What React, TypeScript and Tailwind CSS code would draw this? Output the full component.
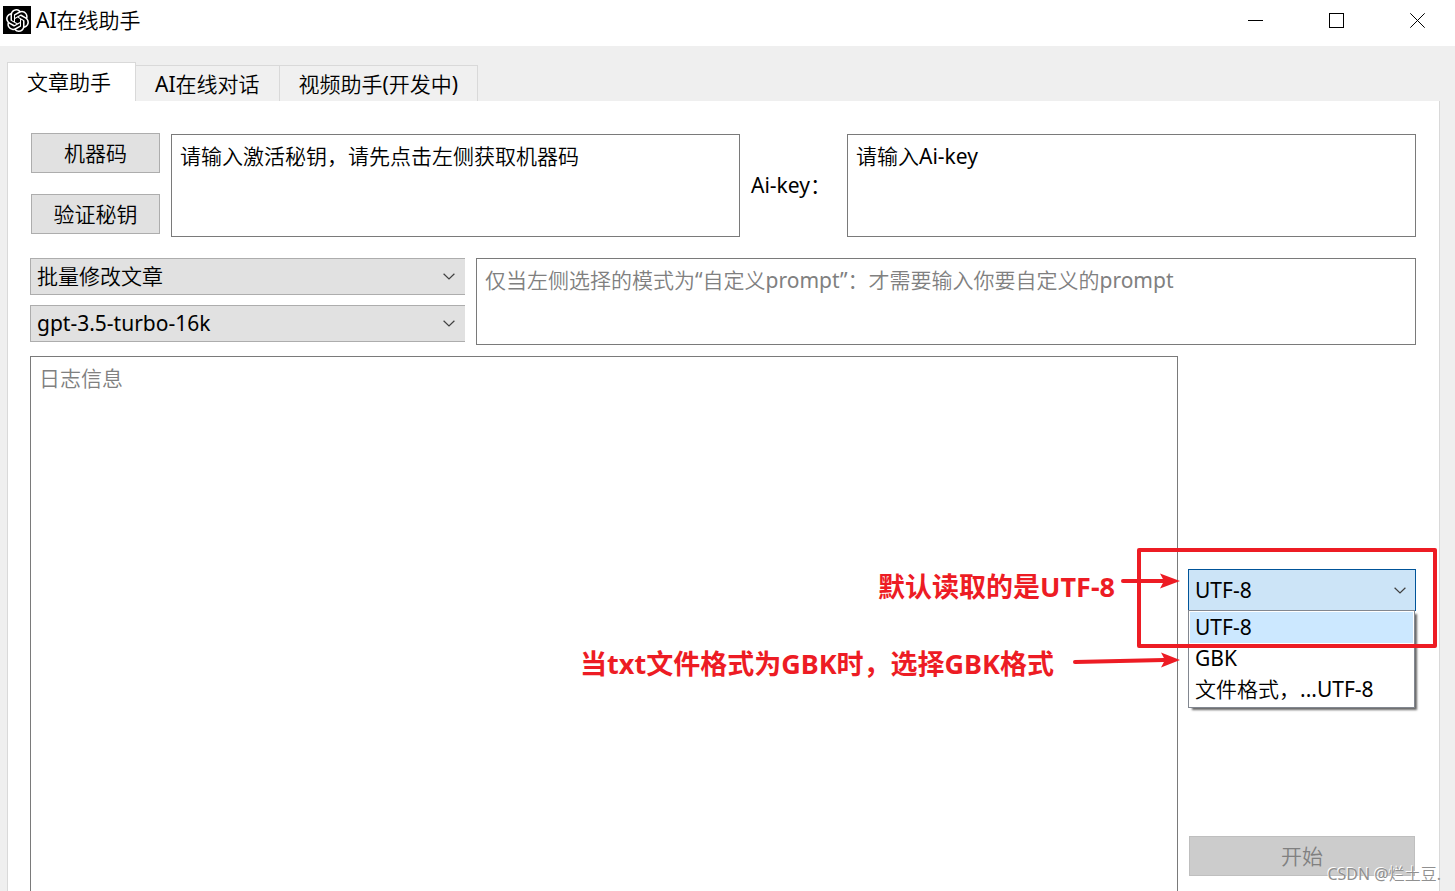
import { useState } from "react";
import type { ReactNode } from "react";
import { SiOpenai } from "react-icons/si";

const tabs = ["文章助手", "AI在线对话", "视频助手(开发中)"];
const encodings = ["UTF-8", "GBK", "文件格式，...UTF-8"];

function Chevron() {
  return (
    <svg
      className="pointer-events-none absolute right-[10px] h-[7px] w-[12px]"
      viewBox="0 0 12 7"
      fill="none"
      stroke="#404040"
      strokeWidth="1.2"
      aria-hidden="true"
    >
      <path d="M0.6 0.8 6 6 11.4 0.8" />
    </svg>
  );
}

function WindowButton({ label, children }: { label: string; children: ReactNode }) {
  return (
    <button type="button" aria-label={label}>
      <svg className="size-[15px]" viewBox="0 0 15 15" fill="none" stroke="#000">
        {children}
      </svg>
    </button>
  );
}

function TitleBar() {
  return (
    <header className="flex h-[46px] items-start justify-between bg-white pr-[30px] pl-[3px]">
      <div className="flex h-10 items-center gap-[5px]">
        <span className="flex size-7 items-center justify-center bg-black text-white">
          <SiOpenai className="size-[23px]" />
        </span>
        <h1>AI在线助手</h1>
      </div>
      <div className="flex h-10 items-center gap-[66px]">
        <WindowButton label="最小化">
          <path d="M0 7.5H15" />
        </WindowButton>
        <WindowButton label="最大化">
          <rect x="0.5" y="0.5" width="14" height="14" />
        </WindowButton>
        <WindowButton label="关闭">
          <path d="M0.3 0.3 14.7 14.7M14.7 0.3 0.3 14.7" />
        </WindowButton>
      </div>
    </header>
  );
}

function ModeSelect({ label, options }: { label: string; options: string[] }) {
  return (
    <div className="relative flex items-center">
      <select
        aria-label={label}
        className="h-[37px] w-full appearance-none border border-r-0 border-[#adadad] bg-[#e1e1e1] pb-[2px] pl-[6px] outline-none"
      >
        {options.map((option) => (
          <option key={option}>{option}</option>
        ))}
      </select>
      <Chevron />
    </div>
  );
}

const noteText =
  "absolute z-20 font-['Noto_Sans','Noto_Sans_CJK_SC',sans-serif] text-[27px] leading-9 font-bold whitespace-nowrap text-[#ed1c24]";

function EncodingNotes() {
  return (
    <>
      <div className="pointer-events-none absolute -top-[21px] -left-[51px] z-20 h-[100px] w-[300px] rounded-xs border-4 border-[#ed1c24]" />
      <p className={`${noteText} top-0 right-[301px]`}>默认读取的是UTF-8</p>
      <p className={`${noteText} top-[77px] right-[362px]`}>当txt文件格式为GBK时，选择GBK格式</p>
      <svg
        className="pointer-events-none absolute top-0 right-[236px] z-20 h-[110px] w-[112px]"
        viewBox="0 0 112 110"
        fill="#ed1c24"
        stroke="#ed1c24"
        aria-hidden="true"
      >
        <path d="M55 12H96" strokeWidth="4" strokeLinecap="round" />
        <path d="M92 4.5 112 12 92 19.5 96 12Z" stroke="none" />
        <path d="M7 93 96 91" strokeWidth="4" strokeLinecap="round" />
        <path d="M93 83.5 112 91 93 98.5 97 91Z" stroke="none" />
      </svg>
    </>
  );
}

function EncodingSelect() {
  const [encoding, setEncoding] = useState(encodings[0]);

  return (
    <div className="relative">
      <div className="relative flex items-center">
        <select
          aria-label="文件编码"
          value={encoding}
          onChange={(e) => setEncoding(e.target.value)}
          className="h-[42px] w-full appearance-none border border-[#005499] bg-[#cce4f7] pl-[6px] outline-none"
        >
          {encodings.map((item) => (
            <option key={item}>{item}</option>
          ))}
        </select>
        <Chevron />
      </div>
      <ul
        role="listbox"
        aria-label="文件编码选项"
        className="absolute inset-x-0 top-[41px] z-10 mr-px border border-[#828790] bg-white p-px pb-[2px] shadow-[3px_3px_2px_-1px_rgba(0,0,0,0.6)]"
      >
        {encodings.map((item) => (
          <li
            key={item}
            role="option"
            aria-selected={item === encoding}
            onClick={() => setEncoding(item)}
            className="h-[31px] pl-[5px] leading-[31px] aria-selected:bg-[#cce8ff]"
          >
            {item}
          </li>
        ))}
      </ul>
      <EncodingNotes />
    </div>
  );
}

const pushButton = "h-10 border border-[#adadad] bg-[#e1e1e1]";
const textBox =
  "block resize-none border border-[#7a7a7a] bg-white px-2 py-[7px] leading-7 outline-none placeholder:text-[#808080]";

export default function App() {
  const [active, setActive] = useState(0);

  return (
    <div className="relative flex min-h-screen flex-col bg-[#efefef] font-['Noto_Sans','Noto_Sans_CJK_SC_DemiLight','Noto_Sans_CJK_SC_Light','Noto_Sans_CJK_SC',sans-serif] text-[21px] leading-7 text-black">
      <TitleBar />

      <nav role="tablist" className="flex h-[55px] items-end pl-[7px]">
        {tabs.map((tab, i) => (
          <button
            key={tab}
            type="button"
            role="tab"
            aria-selected={i === active}
            onClick={() => setActive(i)}
            className={
              i === active
                ? "h-[39px] border border-b-0 border-[#d9d9d9] bg-white pr-6 pl-[19px]"
                : "h-9 border-t border-r border-[#d9d9d9] bg-[#f0f0f0] pt-px pr-[19px] pl-[19px]"
            }
          >
            {tab}
          </button>
        ))}
      </nav>

      <main className="mr-[15px] ml-[7px] flex flex-1 flex-col border-x border-[#d9d9d9] bg-white pt-8 pr-[23px] pl-[22px]">
        <section className="flex gap-[11px] pl-px">
          <div className="flex w-[129px] shrink-0 flex-col gap-[21px]">
            <button type="button" className={pushButton}>
              机器码
            </button>
            <button type="button" className={pushButton}>
              验证秘钥
            </button>
          </div>
          <textarea
            aria-label="激活秘钥"
            defaultValue="请输入激活秘钥，请先点击左侧获取机器码"
            className={`${textBox} mt-px h-[103px] min-w-0 flex-1`}
          />
          <label htmlFor="ai-key" className="w-[85px] shrink-0 self-center whitespace-nowrap">
            Ai-key：
          </label>
          <textarea
            id="ai-key"
            defaultValue="请输入Ai-key"
            className={`${textBox} mt-px h-[103px] min-w-0 flex-1`}
          />
        </section>

        <section className="mt-[21px] flex gap-[11px]">
          <div className="flex w-[435px] shrink-0 flex-col gap-[10px]">
            <ModeSelect label="模式" options={["批量修改文章", "自定义prompt"]} />
            <ModeSelect label="模型" options={["gpt-3.5-turbo-16k"]} />
          </div>
          <textarea
            aria-label="自定义prompt"
            placeholder="仅当左侧选择的模式为“自定义prompt”：才需要输入你要自定义的prompt"
            className={`${textBox} h-[87px] min-w-0 flex-1`}
          />
        </section>

        <section className="mt-[11px] flex flex-1 gap-[10px]">
          <textarea
            aria-label="日志"
            placeholder="日志信息"
            readOnly
            className={`${textBox} min-w-0 flex-1 border-b-0`}
          />
          <div className="flex w-[228px] shrink-0 flex-col justify-end gap-[225px] pb-[15px]">
            <EncodingSelect />
            <button
              type="button"
              disabled
              className="mx-px h-10 border border-[#bfbfbf] bg-[#cccccc] text-[#808080]"
            >
              开始
            </button>
          </div>
        </section>
      </main>

      <p className="absolute right-[14px] bottom-[5px] text-base leading-6 text-[#909090] [text-shadow:-1px_-1px_0_#fff]">
        CSDN @烂土豆.
      </p>
    </div>
  );
}
